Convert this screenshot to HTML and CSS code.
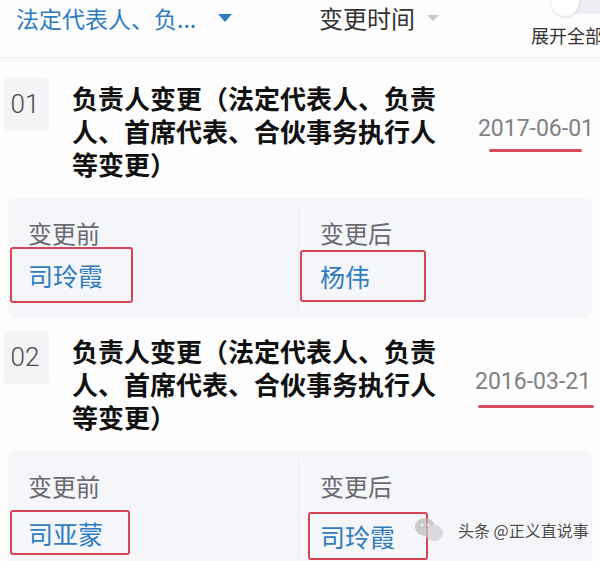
FILE: index.html
```html
<!DOCTYPE html>
<html lang="zh-CN">
<head>
<meta charset="utf-8">
<title>变更记录</title>
<link rel="stylesheet" href="styles.css">
</head>
<body>
<div class="page">
  <div class="filters">
    <div class="filter filter-type">
      <span class="filter-text">法定代表人、负...</span>
      <span class="tri tri-blue"></span>
    </div>
    <div class="filter filter-time">
      <span class="filter-text">变更时间</span>
      <span class="tri tri-gray"></span>
    </div>
    <div class="expand">
      <span class="switch"><span class="knob"></span></span>
      <span class="expand-text">展开全部</span>
    </div>
  </div>

  <div class="list">
    <div class="item">
      <div class="row">
        <div class="num">01</div>
        <div class="title">负责人变更（法定代表人、负责人、首席代表、合伙事务执行人等变更）</div>
        <div class="date-wrap">
          <span class="date">2017-06-01</span>
          <span class="mark mark-a"></span>
        </div>
      </div>
      <div class="card">
        <div class="col col-left">
          <div class="label">变更前</div>
          <div class="name box-l1">司玲霞</div>
        </div>
        <div class="col col-right">
          <div class="label">变更后</div>
          <div class="name box-r1">杨伟</div>
        </div>
      </div>
    </div>

    <div class="item">
      <div class="row">
        <div class="num">02</div>
        <div class="title">负责人变更（法定代表人、负责人、首席代表、合伙事务执行人等变更）</div>
        <div class="date-wrap">
          <span class="date">2016-03-21</span>
          <span class="mark mark-b"></span>
        </div>
      </div>
      <div class="card">
        <div class="col col-left">
          <div class="label">变更前</div>
          <div class="name box-l2">司亚蒙</div>
        </div>
        <div class="col col-right">
          <div class="label">变更后</div>
          <div class="name box-r2">司玲霞</div>
        </div>
      </div>
    </div>
  </div>

  <div class="watermark">
    <svg class="wm-icon" width="32" height="30" viewBox="0 0 32 30">
      <ellipse cx="12" cy="12" rx="10" ry="9" fill="#b8b8bc"/>
      <ellipse cx="21" cy="18" rx="9" ry="8" fill="#cfcfd3"/>
      <circle cx="9" cy="10" r="1.4" fill="#f2f2f2"/>
      <circle cx="15" cy="10" r="1.4" fill="#f2f2f2"/>
    </svg>
    <span class="wm-text">头条 @正义直说事</span>
  </div>
</div>
</body>
</html>
```

FILE: styles.css
```css
* { box-sizing: border-box; }
html, body {
  margin: 0;
  padding: 0;
  background: #fdfdfd;
}
body {
  width: 600px;
  height: 561px;
  overflow: hidden;
  font-family: "Noto Sans CJK SC", "Noto Sans", sans-serif;
}
.page {
  position: relative;
  width: 600px;
  height: 561px;
  overflow: hidden;
}

/* header filters */
.filters {
  display: flex;
  align-items: flex-start;
  height: 58px;
  border-bottom: 1px solid #f0f0f2;
}
.filter {
  display: flex;
  align-items: center;
  height: 36px;
  flex-shrink: 0;
}
.filter-text {
  font-size: 23px;
  line-height: 36px;
}
.filter-type {
  width: 319px;
  padding-left: 16px;
  color: #2f7cc4;
}
.filter-type .tri { margin-left: 22px; }
.filter-time {
  width: 212px;
  color: #333;
}
.filter-time .filter-text { font-size: 24px; }
.filter-time .tri { margin-left: 12px; }
.tri {
  width: 0;
  height: 0;
  border-left: 7px solid transparent;
  border-right: 7px solid transparent;
}
.tri-blue { border-top: 8px solid #2f7cc4; }
.tri-gray {
  border-left-width: 6px;
  border-right-width: 6px;
  border-top: 6px solid #c9c9cc;
}
.expand {
  display: flex;
  flex-direction: column;
  align-items: flex-start;
  flex-shrink: 0;
  white-space: nowrap;
}
.switch {
  display: block;
  width: 64px;
  height: 24px;
  margin-top: -10px;
  margin-left: 20px;
  border-radius: 12px;
  background: #eceef3;
  position: relative;
}
.knob {
  position: absolute;
  left: 0;
  top: -2px;
  width: 28px;
  height: 28px;
  border-radius: 50%;
  background: #fff;
  box-shadow: 0 1px 3px rgba(0,0,0,0.15);
}
.expand-text {
  font-size: 18px;
  line-height: 24px;
  color: #333;
  margin-top: 9px;
}

/* list */
.list {
  padding-top: 7px;
}
.item {
  padding-top: 13px;
}
.row {
  display: flex;
  align-items: flex-start;
  padding-left: 4px;
  height: 120px;
}
.num {
  flex-shrink: 0;
  width: 45px;
  height: 53px;
  background: #f4f4f6;
  border-radius: 4px;
  color: #4a4a4f;
  font-family: Roboto, "Noto Sans", sans-serif;
  font-weight: 300;
  font-size: 26px;
  line-height: 53px;
  text-align: center;
  padding-right: 3px;
}
.title {
  flex-shrink: 0;
  width: 370px;
  margin-left: 23px;
  margin-top: 3px;
  font-size: 26px;
  line-height: 33px;
  font-weight: 700;
  color: #111;
}
.date-wrap {
  display: flex;
  flex-direction: column;
  align-items: flex-start;
  margin-left: auto;
  margin-top: 37px;
  padding-right: 6px;
}
.date {
  font-family: Roboto, "Noto Sans", sans-serif;
  font-size: 23px;
  line-height: 28px;
  color: #808085;
  white-space: nowrap;
}
.mark {
  display: block;
  height: 3px;
  border-radius: 2px;
  background: #d9475a;
  margin-top: 6px;
}
.mark-a { width: 93px; margin-left: 11px; }
.mark-b { width: 116px; margin-left: 3px; margin-top: 9px; }

/* card */
.card {
  display: grid;
  grid-template-columns: 290px 1fr;
  margin: 0 8px;
  height: 120px;
  background: #f5f6fa;
  border-radius: 8px;
  padding: 8px 0 0;
}
.col {
  padding-top: 14px;
}
.col-left { padding-left: 20px; }
.col-right {
  padding-left: 21px;
  border-left: 1px solid #e8e9ee;
  margin-bottom: 8px;
}
.label {
  font-size: 24px;
  line-height: 26px;
  color: #6a6a70;
}
.name {
  display: inline-block;
  font-size: 25px;
  line-height: 28px;
  color: #2f7cbf;
  border: 2px solid #d84451;
  border-radius: 3px;
  white-space: nowrap;
}
.box-l1 {
  width: 123px;
  margin: 1px 0 0 -18px;
  padding: 12px 0 12px 16px;
}
.box-r1 {
  width: 126px;
  margin: 4px 0 0 -20px;
  padding: 10px 0 10px 18px;
}
.box-l2 {
  width: 120px;
  margin: 11px 0 0 -18px;
  padding: 7px 0 6px 16px;
}
.box-r2 {
  width: 120px;
  margin: 13px 0 0 -12px;
  padding: 8px 0 8px 10px;
}

/* watermark */
.watermark {
  position: absolute;
  left: 413px;
  top: 515px;
  display: flex;
  align-items: center;
  white-space: nowrap;
}
.wm-icon {
  margin-right: 13px;
  opacity: 0.7;
}
.wm-text {
  font-size: 16px;
  color: #4a4a4a;
  text-shadow: 1px 1px 0 #fff, -1px -1px 0 #fff, 0 0 3px #ddd;
}
```
